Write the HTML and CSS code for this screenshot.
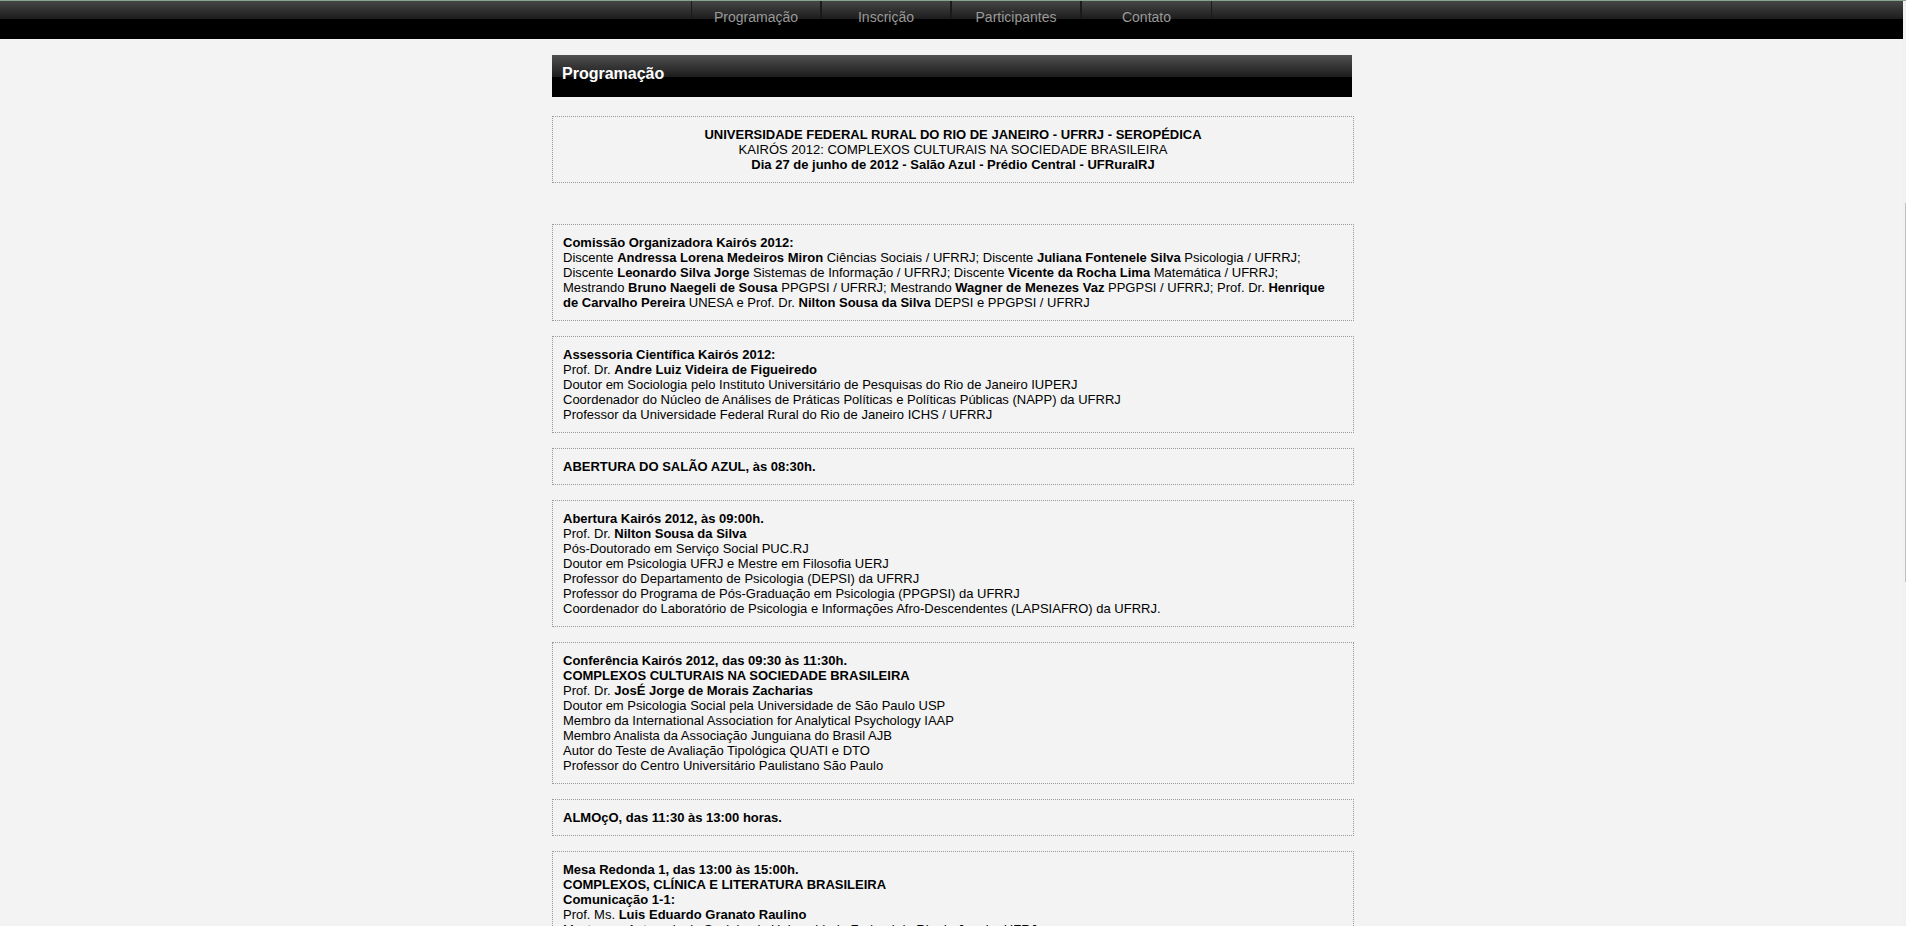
FILE: index.html
```
<!DOCTYPE html>
<html lang="pt-BR">
<head>
<meta charset="utf-8">
<title>Kairós 2012 - Programação</title>
<link rel="stylesheet" href="styles.css">
</head>
<body>
<div class="viewport">
  <div class="page">
    <nav class="topbar">
      <ul class="menu">
        <li><a href="#programacao">Programação</a></li>
        <li><a href="#inscricao">Inscrição</a></li>
        <li><a href="#participantes">Participantes</a></li>
        <li><a href="#contato">Contato</a></li>
      </ul>
    </nav>
    <main class="content" id="programacao">
      <h1 class="title">Programação</h1>
      <section class="box intro">
        <b>UNIVERSIDADE FEDERAL RURAL DO RIO DE JANEIRO - UFRRJ - SEROPÉDICA</b><br>
        KAIRÓS 2012: COMPLEXOS CULTURAIS NA SOCIEDADE BRASILEIRA<br>
        <b>Dia 27 de junho de 2012 - Salão Azul - Prédio Central - UFRuralRJ</b>
      </section>
      <section class="box">
        <b>Comissão Organizadora Kairós 2012:</b><br>
        Discente <b>Andressa Lorena Medeiros Miron</b> Ciências Sociais / UFRRJ; Discente <b>Juliana Fontenele Silva</b> Psicologia / UFRRJ;
        Discente <b>Leonardo Silva Jorge</b> Sistemas de Informação / UFRRJ; Discente <b>Vicente da Rocha Lima</b> Matemática / UFRRJ;
        Mestrando <b>Bruno Naegeli de Sousa</b> PPGPSI / UFRRJ; Mestrando <b>Wagner de Menezes Vaz</b> PPGPSI / UFRRJ; Prof. Dr. <b>Henrique
        de Carvalho Pereira</b> UNESA e Prof. Dr. <b>Nilton Sousa da Silva</b> DEPSI e PPGPSI / UFRRJ
      </section>
      <section class="box">
        <b>Assessoria Científica Kairós 2012:</b><br>
        Prof. Dr. <b>Andre Luiz Videira de Figueiredo</b><br>
        Doutor em Sociologia pelo Instituto Universitário de Pesquisas do Rio de Janeiro IUPERJ<br>
        Coordenador do Núcleo de Análises de Práticas Políticas e Políticas Públicas (NAPP) da UFRRJ<br>
        Professor da Universidade Federal Rural do Rio de Janeiro ICHS / UFRRJ
      </section>
      <section class="box"><b>ABERTURA DO SALÃO AZUL, às 08:30h.</b></section>
      <section class="box">
        <b>Abertura Kairós 2012, às 09:00h.</b><br>
        Prof. Dr. <b>Nilton Sousa da Silva</b><br>
        Pós-Doutorado em Serviço Social PUC.RJ<br>
        Doutor em Psicologia UFRJ e Mestre em Filosofia UERJ<br>
        Professor do Departamento de Psicologia (DEPSI) da UFRRJ<br>
        Professor do Programa de Pós-Graduação em Psicologia (PPGPSI) da UFRRJ<br>
        Coordenador do Laboratório de Psicologia e Informações Afro-Descendentes (LAPSIAFRO) da UFRRJ.
      </section>
      <section class="box">
        <b>Conferência Kairós 2012, das 09:30 às 11:30h.</b><br>
        <b>COMPLEXOS CULTURAIS NA SOCIEDADE BRASILEIRA</b><br>
        Prof. Dr. <b>JosÉ Jorge de Morais Zacharias</b><br>
        Doutor em Psicologia Social pela Universidade de São Paulo USP<br>
        Membro da International Association for Analytical Psychology IAAP<br>
        Membro Analista da Associação Junguiana do Brasil AJB<br>
        Autor do Teste de Avaliação Tipológica QUATI e DTO<br>
        Professor do Centro Universitário Paulistano São Paulo
      </section>
      <section class="box"><b>ALMOçO, das 11:30 às 13:00 horas.</b></section>
      <section class="box">
        <b>Mesa Redonda 1, das 13:00 às 15:00h.</b><br>
        <b>COMPLEXOS, CLÍNICA E LITERATURA BRASILEIRA</b><br>
        <b>Comunicação 1-1:</b><br>
        Prof. Ms. <b>Luis Eduardo Granato Raulino</b><br>
        Mestre em Antropologia Social pela Universidade Federal do Rio de Janeiro UFRJ
      </section>
    </main>
  </div>
  <div class="scroll-track"><div class="scroll-thumb"></div></div>
</div>
</body>
</html>
```
FILE: styles.css
```
* { box-sizing: border-box; }

body {
  margin: 0;
  background: #f3f3f3;
  color: #000;
  font: 13px/15px "Liberation Sans", Arial, sans-serif;
}

.viewport {
  position: relative;
  height: 100vh;
  overflow: hidden;
  border-top: 1px solid #87a58c;
}

.topbar {
  display: flex;
  justify-content: center;
  height: 38px;
  padding-right: 3px;
  background: linear-gradient(#464646, #1c1c1c 18px, #000 18px);
}

.menu {
  display: flex;
  margin: 0;
  padding: 0;
  list-style: none;
  height: 18px;
  border-left: 1px solid #1a1a1a;
}

.menu li {
  width: 130px;
  border-right: 2px solid #1a1a1a;
}

.menu li:last-child { border-right-width: 1px; }

.menu a {
  display: block;
  padding-top: 8px;
  color: #999;
  font-size: 14px;
  line-height: 16px;
  text-align: center;
  text-decoration: none;
}

.content {
  width: 802px;
  max-width: 100%;
  margin: 16px auto 0;
}

.title {
  margin: 0 2px 19px 0;
  padding: 10px 10px 14px;
  background: linear-gradient(#505050, #1c1c1c 22px, #000 22px);
  color: #fff;
  font-size: 16px;
  line-height: 18px;
}

.box {
  margin-bottom: 15px;
  padding: 10px;
  border: 1px dotted #999;
}

.intro {
  margin-bottom: 41px;
  text-align: center;
}

.scroll-track {
  position: absolute;
  top: 0;
  right: 0;
  bottom: 0;
  width: 3px;
  padding: 202px 0 0 2px;
  background: #f1f1f1;
}

.scroll-thumb {
  height: 379px;
  background: #c1c1c1;
}
```
